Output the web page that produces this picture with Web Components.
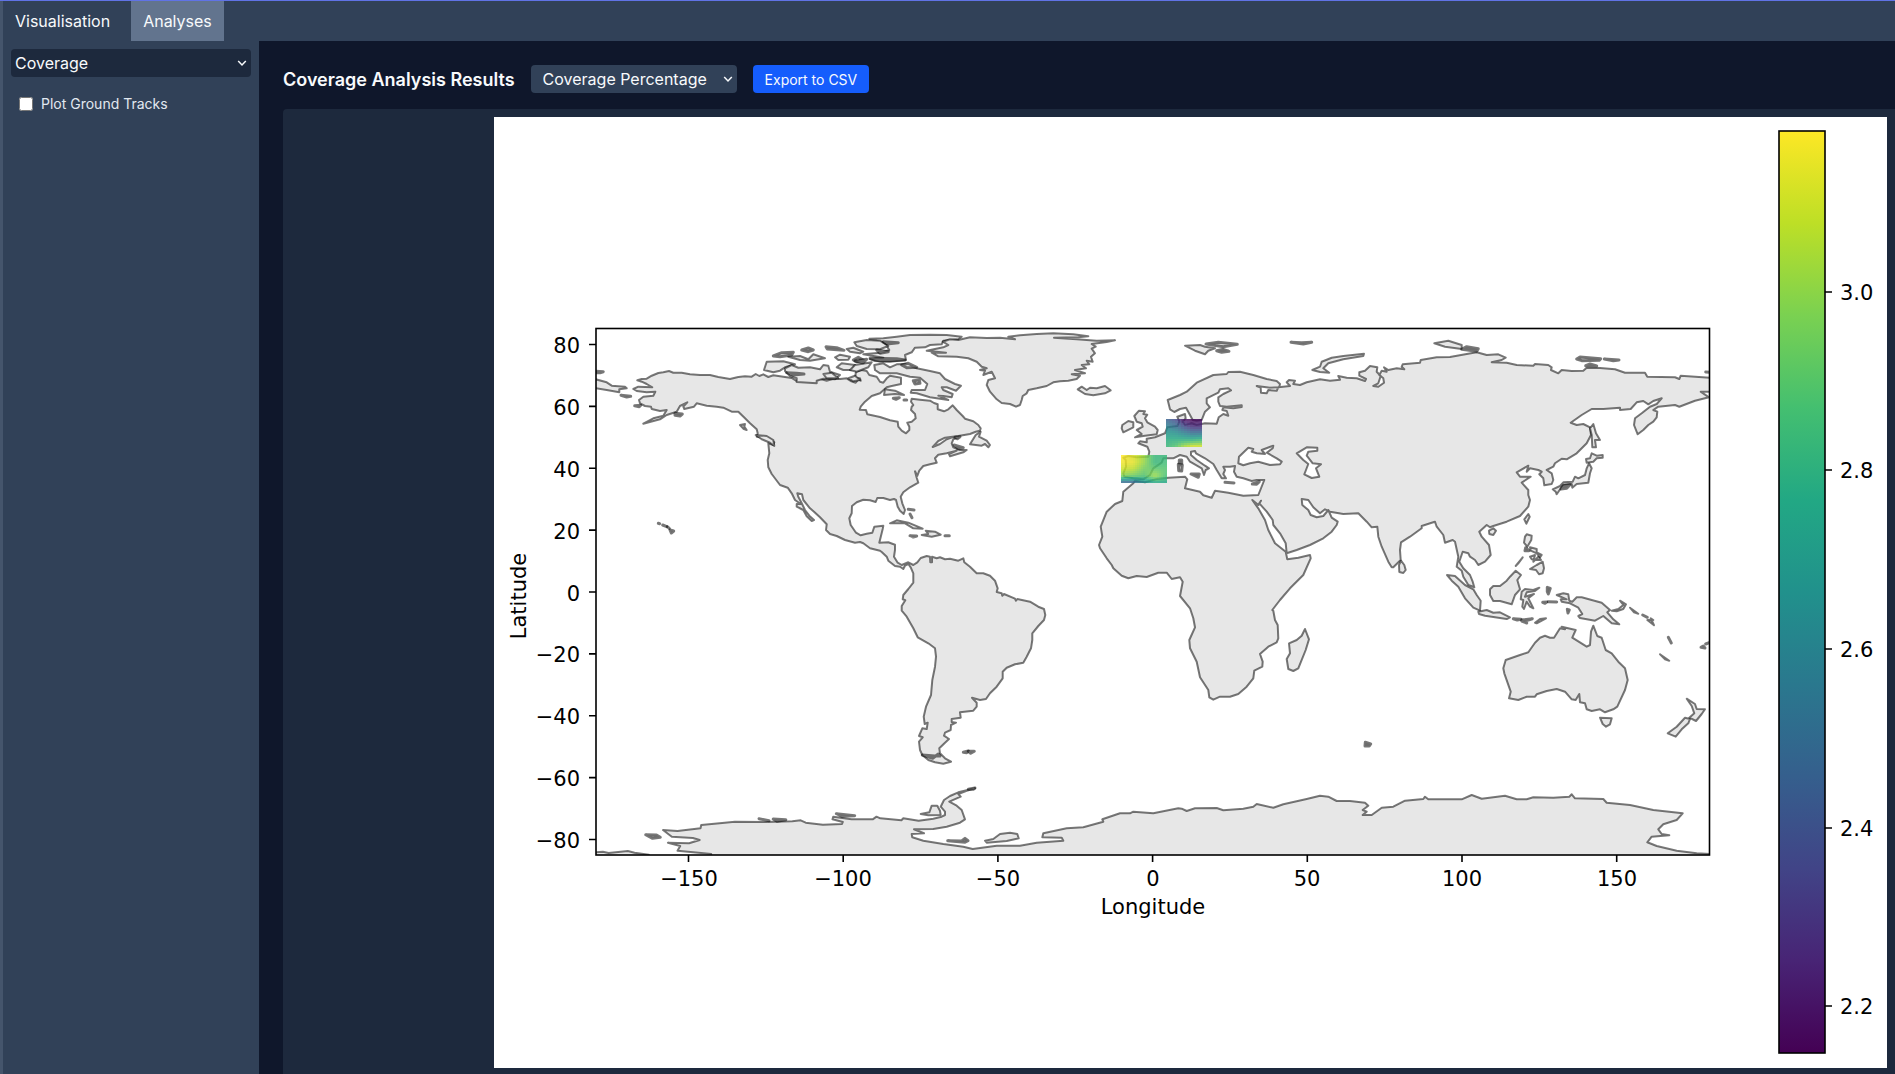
<!DOCTYPE html>
<html lang="en">
<head>
<meta charset="utf-8">
<title>Coverage Analysis</title>
<style>
  html, body { height: 100%; margin: 0; }
  body { font-family: Inter, "Liberation Sans", sans-serif; font-size: 16px; line-height: 24px; background: #0f172b; color: #f8fafc; overflow: hidden; }
</style>
</head>
<body>
<app-shell>
  <tab-strip slot="tabs"></tab-strip>
  <side-panel slot="side"></side-panel>
  <results-view slot="main"><coverage-map></coverage-map></results-view>
</app-shell>

<script>
class BaseElement extends HTMLElement {
  constructor() {
    super();
    this.attachShadow({ mode: 'open' }).innerHTML = this.markup();
  }
}

customElements.define('app-shell', class extends BaseElement {
  markup() {
    return `<style>
      :host { display: flex; flex-direction: column; height: 100vh; box-sizing: border-box; border-top: 1px solid #6073e6; }
      .frame { flex: 1; min-height: 0; display: flex; flex-direction: column; border-left: 3px solid #45556c; }
      .body { flex: 1; min-height: 0; display: flex; }
      main { flex: 1; min-width: 0; overflow: hidden; }
    </style>
    <div class="frame">
      <slot name="tabs"></slot>
      <div class="body"><slot name="side"></slot><main><slot name="main"></slot></main></div>
    </div>`;
  }
});

customElements.define('tab-strip', class extends BaseElement {
  markup() {
    return `<style>
      :host { display: block; background: #314158; }
      nav { display: flex; gap: 9px; }
      button { font: inherit; color: inherit; border: 0; background: transparent; padding: 8px 12px; cursor: pointer; }
      button[aria-current] { background: #62748e; }
    </style>
    <nav><button type="button">Visualisation</button><button type="button" aria-current="page">Analyses</button></nav>`;
  }
});

/* A drop-down with a thin chevron laid over its right end. */
customElements.define('drop-down', class extends BaseElement {
  markup() {
    return `<style>
      :host { display: grid; align-items: center; }
      select, svg { grid-area: 1 / 1; }
      select { appearance: none; width: 100%; height: 28px; margin: 0; font: inherit; color: inherit; background: var(--fill, #1d293d); border: 0; border-radius: 4px; padding: 0 24px 0 var(--inset, 4px); }
      svg { justify-self: end; margin-right: 4px; width: 10px; height: 8px; pointer-events: none; fill: none; stroke: currentColor; stroke-width: 1.5; }
    </style>
    <select aria-label="${this.getAttribute('label')}"><option>${this.getAttribute('value')}</option></select>
    <svg viewBox="0 0 10 8" aria-hidden="true"><path d="M1.2 2 5 6l3.800-4"/></svg>`;
  }
});

customElements.define('side-panel', class extends BaseElement {
  markup() {
    return `<style>
      :host { display: block; flex: none; width: 256px; box-sizing: border-box; padding: 8px; background: #314158; }
      label { display: flex; align-items: center; gap: 8px; margin-top: 17px; padding: 0 8px; font-size: 14px; line-height: 20px; color: #e2e8f0; }
      input { margin: 0; width: 14px; height: 14px; }
    </style>
    <drop-down label="Analysis" value="Coverage"></drop-down>
    <label><input type="checkbox">Plot Ground Tracks</label>`;
  }
});

customElements.define('results-view', class extends BaseElement {
  markup() {
    return `<style>
      :host { display: block; padding: 24px 0 0 24px; }
      header { display: flex; align-items: center; gap: 16px; margin-bottom: 16px; }
      h2 { margin: 0; font-size: 18px; line-height: 26px; padding-top: 2px; font-weight: 600; }
      drop-down { --fill: #314158; --inset: 12px; width: 206px; }
      button { font: inherit; font-size: 14px; line-height: 20px; color: inherit; background: #155dfc; border: 0; border-radius: 4px; padding: 5px 12px 3px; }
      section { background: #1d293d; border-radius: 4px 0 0 0; padding: 8px; display: flex; justify-content: flex-end; }
    </style>
    <header>
      <h2>Coverage Analysis Results</h2>
      <drop-down label="Result" value="Coverage Percentage"></drop-down>
      <button type="button">Export to CSV</button>
    </header>
    <section><slot></slot></section>`;
  }
});

/* Coastlines are digitised tile by tile, at three units to one chart unit.
   Each tile letter gives the origin and the scale of its points. */
const TILES = {
  A: [490, 310, 3, 3], B: [830, 310, 3, 3], C: [1090, 310, 3, 3], D: [1390, 310, 3, 3],
  E: [850, 540, 3, 3], F: [1130, 540, 3, 3], G: [1410, 540, 3, 3], H: [490, 760, 2.6133, 3]
};

const CONTINENTS = [
  /* the Americas */
  `A 442,211 455,207 470,206 485,197 505,189 520,187 537,183 550,188 575,188 600,193 630,195 660,195 685,201 720,207 745,201 765,199 785,200 797,192 808,198 820,193 835,201 850,196 870,199 905,204 918,212 945,207 975,210 990,206 1010,212 1030,206 1050,207 1070,205 1082,213 1097,218 1105,208
   B 92,212 90,205 75,205 78,185 95,180 110,183 118,195 140,200 150,215 160,218 170,205 180,197 213,203 213,222 185,228 170,232 150,250 125,258 105,275 92,290 89,299 108,300 112,313 150,321 180,331 203,335 205,350 215,362 228,370 238,360 238,350 232,338 245,335 257,325 255,312 243,300 245,290 250,285 243,275 245,266 270,269 300,272 312,279 323,283 323,298 342,304 355,298 368,286 380,300 398,318 405,326 430,334 445,345 452,355 450,362 437,365 420,372 385,378 345,383 325,393 308,411 330,402 350,388 370,380 385,382 370,388 365,400 370,412 390,420 410,420 400,427 360,439 357,432 380,422 350,430 325,434 315,445 320,458 300,463 280,468 268,482 262,498 255,484 260,503 265,518 240,532 220,547 212,560 217,580 225,600 221,612 210,602 203,590 198,570 192,567 180,570 160,564 142,564 137,576 120,571 100,569 80,577 66,588 65,610 58,625 62,645 78,668 92,676 110,671 127,668 133,650 160,647 158,657 148,698 175,697 195,704 195,720 192,740 203,758 215,765 235,757 250,765 262,757 272,744 290,738 300,740 301,757 306,757 306,740 320,745 330,742 345,748 360,746 385,752 400,745 403,757 420,770 440,790 460,790 480,797 495,812 503,835 500,846 515,850 517,857 522,852 555,866 558,872 562,867 600,875 625,890 642,897
   E 582,207 586,225 582,240 565,258 547,280 547,300 543,325 530,350 520,368 495,373 470,383 458,395 458,415 440,440 420,460 408,477 390,480 366,473 380,488 380,500 370,512 330,517 332,533 305,537 305,546 318,548 303,555 302,570 285,578 282,587 297,597 285,608 268,625 270,640 285,655 303,665 280,671 255,667 235,660 217,645 210,630 207,605 218,592 207,588 217,565 230,567 233,548 224,552 221,530 228,500 243,465 247,420 255,380 258,350 255,325 235,310 203,292 190,265 170,230 155,212 155,198 166,181 158,178 160,165 175,147 190,128 190,100 182,82 175,72 165,77 160,87 150,80 135,78 115,62 110,50 95,36
   B 150,722 120,715 100,700 90,696 75,698 45,690 20,678
   A 1020,672 1008,660 1010,643 990,622 972,605 960,595 940,570 936,553 922,550 925,560 933,575 945,600 958,617 972,630 965,633 950,619 940,600 920,590 920,582 932,582 915,570 905,550 893,533 870,525 845,492 835,472 833,450 838,430 835,400 850,405 853,397 835,385 800,380 803,370 800,358 780,340 762,322 745,305 725,305 700,293 680,290 650,287 620,280 612,290 583,297 580,290 592,277 570,288 560,305 530,315 510,328 460,341 490,325 520,317 530,300 510,303 485,297 483,290 465,288 450,280 447,270 460,260 490,257 496,245 470,247 440,243 430,237 445,230 487,232 470,222 455,215`,
  /* Europe, Asia and Africa */
  `C 103,500 100,490 108,470 107,450 100,443 115,438 140,442 175,440 178,425 172,410 145,400 150,394 170,397 170,386 195,382 225,370 232,352 262,348 268,335 262,320 285,312 287,325 278,335 285,345 305,340 320,345 345,340 380,341 386,322 400,312 415,317 410,303 397,300 400,292 430,295 455,291 455,286 410,290 390,288 385,275 385,262 400,252 423,241 415,235 390,238 385,248 350,265 350,280 360,292 345,305 335,330 320,332 308,330 300,315 288,293 270,297 253,306 240,298 233,270 270,255 290,245 320,218 370,195 410,192 415,186 450,185 490,195 530,207 560,213 570,222 568,232 540,233 500,228 512,233 513,248 530,250 535,240 560,242 565,232 600,228 590,217 597,210 615,212 610,222 630,225 650,217 690,208 720,212 750,209 745,198 770,203 800,205 825,213 828,207 808,197 808,187 825,182 840,168 862,172 860,185 872,198 865,220 850,228 865,230 882,218 880,205 868,195 875,182 890,185 882,172 895,180 920,175 943,178
   D 35,170 38,163 90,158 92,150 140,142 180,141 230,132 260,127 290,135 325,133 347,143 335,150 305,157 350,158 380,165 430,167 435,162 475,165 485,172 483,180 505,190 515,180 545,183 580,182 590,173 630,174 675,178 705,188 765,188 772,200 855,202 868,207 872,197 960,203 960,245 932,245 957,262 915,272 868,290 855,285 805,290 790,300 802,305 800,322 790,335 775,345 760,360 743,373 732,345 735,325 755,310 780,290 800,282 815,265 790,273 775,283 760,273 740,277 722,297 690,300 690,293 640,297 605,297 575,315 542,338 560,345 580,342 600,352 603,375 590,400 560,430 530,448 515,446 495,460 490,470 470,480 485,490 490,510 485,522 463,526 460,505 448,493 455,485 445,480 420,475 410,485 415,467 380,487 390,500 422,500 395,518 415,540 415,555 420,570 415,590 390,618 350,635 310,648 300,652 290,645 268,665 275,680 297,705 302,735 285,755 265,765 255,750 240,740 235,730 218,725 208,755 220,775 240,795 248,815 253,832 235,825 220,800 215,782 200,770 205,740 195,695 188,690 165,698 160,675 140,650 135,635 125,638 95,648 95,655 60,680 33,697 30,720 32,750 10,772
   C 905,772 895,755 875,710 865,680 862,650 845,652 830,635 805,610 760,612 720,605 705,598 690,610 670,592 655,570 635,567 637,585 655,600 662,615 680,622 700,618 715,600 725,623 743,635 740,645 725,665 700,685 660,705 620,720 590,730 587,700 570,670 550,645 548,630 530,605 508,580 513,572 505,585 487,570 505,595 525,630 535,660 555,700 587,725 592,748 625,743 660,735 662,745 640,795 600,835 570,870 547,900
   F 430,212 435,240 443,255 445,295 440,307 415,320 390,342 398,365 397,380 373,392 370,415 350,440 325,462 300,470 270,470 250,479 238,472 235,450 210,412 200,365 180,325 178,300 195,262 190,235 180,205 150,168 158,125 150,112 125,117 110,98 85,98 50,111 20,108
   C 115,805 95,797 70,775 65,765 50,745 30,715 27,705 37,680 32,650 50,605 75,582 97,573 100,545 130,520 135,512 165,517 200,507 235,503 285,500 292,508 285,535 330,545 340,556 365,563 375,542 415,548 460,557 505,555 523,510 500,510 485,513 460,505 440,500 432,485 435,468 420,470 400,470 405,480 400,492 408,505 395,505 380,480 370,462 345,445 318,430 315,423 303,425 303,435 320,450 345,467 357,475 347,480 342,495 335,475 300,455 290,440 270,435 250,445 220,445 215,458 190,475 180,495 160,508 130,505`,
  /* Antarctica */
  `H 578,282 545,278 490,272 497,258 465,248 520,250 548,240 530,234 475,230 452,210 490,213 550,205 552,195 600,190 640,185 720,186 790,184 812,181 825,188 870,194 920,192 922,186 895,178 897,170 945,178 1000,178 1010,170 1020,175 1075,181 1080,175 1120,182
   E 206,842 250,836 275,830 285,825 285,815 272,800 282,780 300,768 325,757 375,745 350,752 325,762 332,770 298,785 320,797 335,810 345,838 330,848 290,860 250,867 192,868 222,880 185,882 187,892 220,902 280,912 340,920 368,927 440,917 510,917 560,908 640,902 635,893 577,892 580,880 650,865 700,862 760,845 757,838 810,820 840,820 850,815 910,820 985,805
   F 155,806 170,813 195,805 260,804 280,811 340,806 370,800 380,792 430,803 460,793 530,777 570,767 595,770 620,783 660,783 705,788 715,797 698,810 710,815 698,825 725,825 755,803 790,800 825,782 880,777 885,770 895,778 980,778
   G 155,778 185,765 215,776 285,767 320,778 350,778 370,772 430,773 478,770 485,763 495,775 580,777 590,788 660,795 730,810 818,820 800,840 760,853 745,868 755,882 778,886 725,890 712,907 740,918 800,932 860,940 905,942 905,960
   H 578,300`
];

const ISLANDS = [
  /* far east of Siberia, across the date line */
  'A 300,203 350,217 365,227 405,230 410,235 388,238 388,247 350,240 300,232', 'A 300,183 340,185 330,188 300,188',
  'A 393,256 422,259 410,261', 'A 434,287 452,286 448,290', 'A 555,310 577,312 570,318 555,316', 'A 750,345 765,342 763,350 770,360 760,356',
  'A 797,375 830,378 850,390 853,408 840,398 815,388', 'A 505,640 509,641', 'A 518,645 530,650', 'A 532,650 538,655', 'A 540,660 551,663 544,669',
  /* Canadian archipelago */
  'A 830,155 880,154 915,163 885,172 870,182 850,187 822,180',
  'A 885,175 905,165 925,173 960,172 990,178 1000,165 1015,167 1020,185 1050,195 1035,208 1000,206 980,212 980,220 920,216 920,205 900,198 885,183',
  'A 890,188 920,190 942,192 910,195', 'A 895,140 930,138 955,148 970,133 1005,145 960,152 930,150', 'A 850,138 875,128 910,127 905,135 870,140',
  'A 935,120 955,114 970,120 955,125', 'A 1008,110 1040,113 1062,121 1012,117', 'A 1035,142 1050,134 1080,140 1075,149 1045,150', 'A 1040,172 1055,160 1095,165 1085,180 1060,180',
  'B 50,117 70,113 100,125 90,130 60,125', 'B 70,150 85,142 100,150 80,155', 'B 60,180 75,165 125,157 115,172 80,185', 'B 55,205 75,197 90,210 70,214', 'B -20,192 5,188 25,205 -10,205',
  'B 118,86 160,85 200,80 240,75 300,74 350,75 395,80 385,88 340,92 335,103 300,105 285,112 255,113 245,127 225,135 228,150 180,155 135,153 120,147 160,143 100,133 150,128 178,120 165,100',
  'B 73,97 110,90 150,92 175,108 150,118 110,117 80,108', 'B 160,95 205,98 170,102', 'B 110,148 75,153 100,158', 'B 120,145 200,146 225,150 150,153', 'B 140,120 175,125 150,130',
  'B 133,165 160,160 180,172 200,163 225,162 260,175 300,183 330,190 345,207 375,222 393,227 378,242 350,232 335,232 340,240 368,252 365,262 340,258 325,257 355,270 300,262 260,250 242,248 245,240 285,240 292,222 270,203 240,200 200,190 150,190 135,180',
  'B 215,165 235,160 260,172 230,173', 'B 250,212 268,210 270,220 255,222', 'B 165,238 195,242 222,255 195,252 162,255', 'B 190,265 208,263 198,268', 'B 222,270 230,270',
  /* Atlantic islands and the Caribbean */
  'B 420,403 437,375 452,365 447,380 470,392 480,405 475,412 465,402 455,407', 'B 375,382 390,380 382,386', 'B 372,405 400,413 385,416',
  'B 290,122 340,112 355,105 338,95 360,88 385,90 420,82 470,84 510,83 555,88 535,80 570,76 620,72 670,70 730,73 775,79 745,82 672,83 740,88 800,92 855,91 830,96 785,102 797,110 785,116 795,130 783,140 788,155 770,152 778,163 755,165 768,175 735,180 765,190 725,193 750,197 740,207 715,212 690,214 670,217 650,228 620,235 595,240 590,250 578,258 575,270 570,285 558,290 540,282 515,279 500,268 480,245 470,225 475,210 495,205 485,185 460,195 465,182 450,180 470,175 455,170 440,155 415,145 380,140 325,139 305,128 348,128',
  'B 743,238 755,230 770,240 780,233 800,235 825,228 842,241 825,250 790,256 765,252',
  'B 180,640 200,631 235,638 278,656 250,655 225,640', 'B 275,675 295,672 287,662 315,665 332,674 305,680', 'B 240,677 260,678 250,681', 'B 345,677 358,677', 'B 235,598 252,600', 'B 240,612 246,623',
  'C 147,302 165,304 160,312 172,314 165,325 172,337 195,350 203,360 200,373 165,377 135,382 155,372 140,360 158,350 155,340 140,335 133,318', 'C 97,345 115,333 130,337 130,352 100,367 95,355',
  'C 268,450 275,450 275,460 268,460', 'C 265,463 277,465 275,483 266,482', 'C 303,492 328,492 325,502', 'C 405,517 432,519', 'C 487,522 508,515 500,523',
  'C 285,107 330,105 345,110 375,115 355,122 345,133 315,122', 'C 348,102 385,97 442,103 400,110', 'C 380,122 400,118 417,124 395,127',
  'C 667,180 690,170 695,155 725,143 760,138 822,131 820,138 760,148 715,160 700,175 718,188 690,186', 'C 603,97 635,98 665,97 640,102',
  /* Asia */
  'D 133,100 175,92 215,105 215,117 165,110', 'D 215,118 230,110 265,116 260,124', 'D 560,147 570,141 632,146 628,151 575,152', 'D 643,147 687,150 670,152', 'D 587,167 600,162 620,168', 'D 947,186 960,187',
  'D 610,342 618,370 630,390 615,390 618,412 607,412 605,375 600,355', 'D 605,430 620,437 638,435 638,443 620,445 610,455 590,458 588,447 600,445',
  'D 597,460 605,475 600,490 595,518 560,522 547,533 545,522 520,524 500,553 497,545 488,538 510,528 520,517 548,515 555,500 565,505 585,495 590,475', 'D 513,537 520,527 540,524 530,535',
  'D 415,612 419,620 409,641 403,628', 'D 297,662 310,655 318,662 310,675 298,672', 'D 405,680 410,673 425,677 424,690 412,710 402,698', 'D 407,713 417,722 405,722', 'D 420,712 440,717 440,727 455,735 450,742 440,730 422,722',
  'D 420,740 435,735 430,755 445,740 453,750 435,750 425,748', 'D 420,777 440,765 458,755 462,775 458,790 447,793 438,780', 'D 377,768 385,760 398,742', 'D 33,752 43,765 47,780 40,789 28,786 27,765',
  'G 111,105 135,108 165,135 190,148 200,165 212,182 210,212 190,203 165,175 145,140 125,122', 'G 205,215 230,210 250,218 270,217 300,232 290,237 225,227 207,222',
  'G 240,148 250,138 270,138 290,122 300,110 317,92 333,105 322,120 330,148 315,165 305,193 270,183 250,183 240,165', 'G 335,155 345,147 370,150 388,143 375,153 350,157 345,170 372,162 355,175 370,205 360,200 350,185 342,207 337,200 340,180 332,178',
  'G 310,236 333,238 322,240', 'G 335,240 367,236 345,243 350,249 335,243', 'G 375,248 390,237 408,235 380,250', 'G 398,187 410,186 405,190', 'G 415,185 440,186', 'G 412,142 421,145 415,162 412,155', 'G 472,208 478,210 474,219',
  'G 440,165 460,160 475,163 478,182 487,185 500,172 515,172 575,188 600,210 592,217 610,238 628,253 605,250 580,228 555,242 510,234 505,228 517,222 505,203 480,190 455,185 452,178 470,178', 'G 605,212 625,207 640,195 630,182 648,193 640,207 620,214', 'G 660,203 672,217 685,221', 'G 698,225 712,232', 'G 712,240 730,240 722,235 732,256',
  /* Oceania */
  'G 432,293 450,265 465,268 455,260 497,270 487,293 530,320 540,315 543,275 550,257 562,288 575,293 587,330 605,340 625,365 645,385 653,420 645,450 622,500 610,508 585,517 570,508 545,513 530,508 525,490 510,487 508,462 497,480 485,478 465,455 440,447 410,453 380,463 375,470 350,470 325,480 297,475 302,455 283,400 280,385 287,360 330,345 355,337 375,308 390,293 405,287 420,293',
  'G 570,533 605,535 600,553 588,560 578,552', 'G 773,580 800,560 825,533 840,537 835,550 815,568 797,590', 'G 830,476 855,492 860,507 885,508 875,522 858,543 838,533 853,520 845,498', 'G 750,343 778,362 765,358', 'G 775,292 784,309', 'G 873,322 880,318 885,324', 'G 887,312 905,305',
  'F 525,267 537,298 527,330 505,385 490,393 475,387 470,357 480,340 477,310 500,300 515,287', 'F 706,607 722,612 718,618 705,618',
  /* southern islands */
  'E 340,637 355,633 350,638', 'E 355,634 373,634 362,640', 'E 217,645 248,655 265,642 270,648 255,648',
  'E 212,822 238,817 245,797 262,797 270,812 272,825 235,826', 'E 293,902 335,903 345,895 354,902 345,907', 'E 405,902 430,897 450,882 480,878 502,882 506,895 470,903 410,908', 'E 355,748 375,744 370,748',
  'H 407,224 435,225 445,232 425,235', 'H 703,176 729,182', 'H 740,177 773,179 750,184', 'H 905,161 953,167 920,169', 'H 260,278 295,275 310,279 360,273 378,278 415,284 415,300 260,300'
];

const SEAS = [
  'C 445,460 447,440 475,413 490,417 485,425 500,430 525,432 515,420 550,407 548,415 530,428 560,445 575,455 570,463 540,465 505,455 480,460 460,466',
  'C 620,430 650,412 682,413 682,422 655,425 650,437 668,460 693,463 678,475 688,500 665,504 643,493 648,480 655,462 640,450'
];

/* Turns a digitised outline into a path; narrow islets get a heavier line. */
const outline = text => {
  let t;
  const xs = [], ys = [];
  for (const token of text.trim().split(/\s+/)) {
    if (TILES[token]) { t = TILES[token]; continue; }
    const [x, y] = token.split(',').map(Number);
    xs.push(t[0] + x / t[2]);
    ys.push(t[1] + y / t[3]);
  }
  const span = list => Math.max(...list) - Math.min(...list);
  const islet = Math.min(span(xs), span(ys)) < 5 ? ' class="islet"' : '';
  return `<path${islet} d="M${xs.map((x, i) => x.toFixed(1) + ' ' + ys[i].toFixed(1)).join('L')}Z"/>`;
};

const VIRIDIS = ['#440154', '#482475', '#414487', '#355f8d', '#2a788e', '#21918c', '#22a884', '#44bf70', '#7ad151', '#bddf26', '#fde725'];
const shade = v => {
  const p = Math.max(0, Math.min(.9999, v)) * 10, i = Math.floor(p), f = p - i;
  const ch = (c, k) => parseInt(c.slice(1 + k * 2, 3 + k * 2), 16);
  return 'rgb(' + [0, 1, 2].map(k => Math.round(ch(VIRIDIS[i], k) * (1 - f) + ch(VIRIDIS[i + 1], k) * f)) + ')';
};
/* Bilinear fill of a region from a coarse grid of coverage values. */
const heat = (x, y, w, h, cols, rows, grid) => {
  let out = '';
  const cw = w / cols, rh = h / rows, gy = grid.length - 1, gx = grid[0].length - 1;
  for (let r = 0; r < rows; r++) for (let c = 0; c < cols; c++) {
    const v = r / (rows - 1) * gy, u = c / (cols - 1) * gx;
    const r0 = Math.min(gy - 1, Math.floor(v)), c0 = Math.min(gx - 1, Math.floor(u)), a = v - r0, b = u - c0;
    const value = (grid[r0][c0] * (1 - b) + grid[r0][c0 + 1] * b) * (1 - a) + (grid[r0 + 1][c0] * (1 - b) + grid[r0 + 1][c0 + 1] * b) * a;
    out += `<rect x="${x + c * cw}" y="${y + r * rh}" width="${cw}" height="${rh}" fill="${shade(value)}"/>`;
  }
  return `<g opacity=".82" shape-rendering="crispEdges">${out}</g>`;
};

customElements.define('coverage-map', class extends BaseElement {
  markup() {
    const px = lon => 1152.6 + lon * 3.094, py = lat => 592 - lat * 3.094;
    const lats = [80, 60, 40, 20, 0, -20, -40, -60, -80], lons = [-150, -100, -50, 0, 50, 100, 150];
    const sign = n => String(n).replace('-', '\u2212');
    const bar = [['3.0', 292], ['2.8', 470], ['2.6', 649], ['2.4', 828], ['2.2', 1006]];
    return `<style>
      :host { display: block; height: calc(100vh - 123px); aspect-ratio: 1393 / 951; background: #fff; }
      svg { display: block; width: 100%; height: 100%; }
      text { font-family: "DejaVu Sans", sans-serif; font-size: 21px; fill: #000; }
      .land, .sea { fill: #e7e7e7; stroke: #000; stroke-opacity: .53; stroke-width: 2; stroke-linejoin: round; }
      .sea { fill: #fff; }
      .islet { stroke-width: 3; }
      .axis { fill: none; stroke: #000; stroke-width: 1.6; }
    </style>
    <svg viewBox="494 117 1393 951" role="img" aria-label="World map of coverage percentage">
      <defs>
        <clipPath id="plot"><rect x="596" y="328" width="1114" height="527"/></clipPath>
        <linearGradient id="scale" x1="0" y1="1" x2="0" y2="0">${VIRIDIS.map((c, i) => `<stop offset="${i / 10}" stop-color="${c}"/>`).join('')}</linearGradient>
      </defs>
      <g clip-path="url(#plot)">
        <g class="land">${CONTINENTS.map(outline).join('')}${ISLANDS.map(outline).join('')}</g>
        <g class="sea">${SEAS.map(outline).join('')}</g>
        ${heat(1166, 419, 36, 28, 12, 14, [[.3, .22, .05, .02, .03], [.42, .35, .22, .12, .12], [.52, .5, .42, .35, .35], [.62, .62, .62, .62, .66], [.66, .72, .85, .92, .92]])}
        ${heat(1121, 455, 46, 28, 23, 14, [[1, .95, .85, .66, .66], [.98, .97, .84, .66, .68], [.92, .9, .78, .74, .72], [.82, .78, .72, .85, .7], [.35, .34, .5, .62, .6]])}
      </g>
      <rect class="axis" x="596" y="328.5" width="1113.500" height="526.5"/>
      <path class="axis" d="${lats.map(v => `M596 ${py(v)}h-7`).join('')}${lons.map(v => `M${px(v)} 855v7`).join('')}"/>
      ${lats.map(v => `<text x="580" y="${Math.round(py(v) + 8.5)}" text-anchor="end">${sign(v)}</text>`).join('')}
      ${lons.map(v => `<text x="${Math.round(px(v))}" y="886" text-anchor="middle">${sign(v)}</text>`).join('')}
      <text x="1153" y="914" text-anchor="middle">Longitude</text>
      <text transform="translate(526 596) rotate(-90)" text-anchor="middle">Latitude</text>
      <rect x="1779" y="131" width="46" height="922" fill="url(#scale)" stroke="#000" stroke-width="1.6"/>
      <path class="axis" d="${bar.map(b => `M1825 ${b[1]}h7`).join('')}"/>
      ${bar.map(b => `<text x="1840" y="${b[1] + 8}">${b[0]}</text>`).join('')}
    </svg>`;
  }
});
</script>
</body>
</html>
